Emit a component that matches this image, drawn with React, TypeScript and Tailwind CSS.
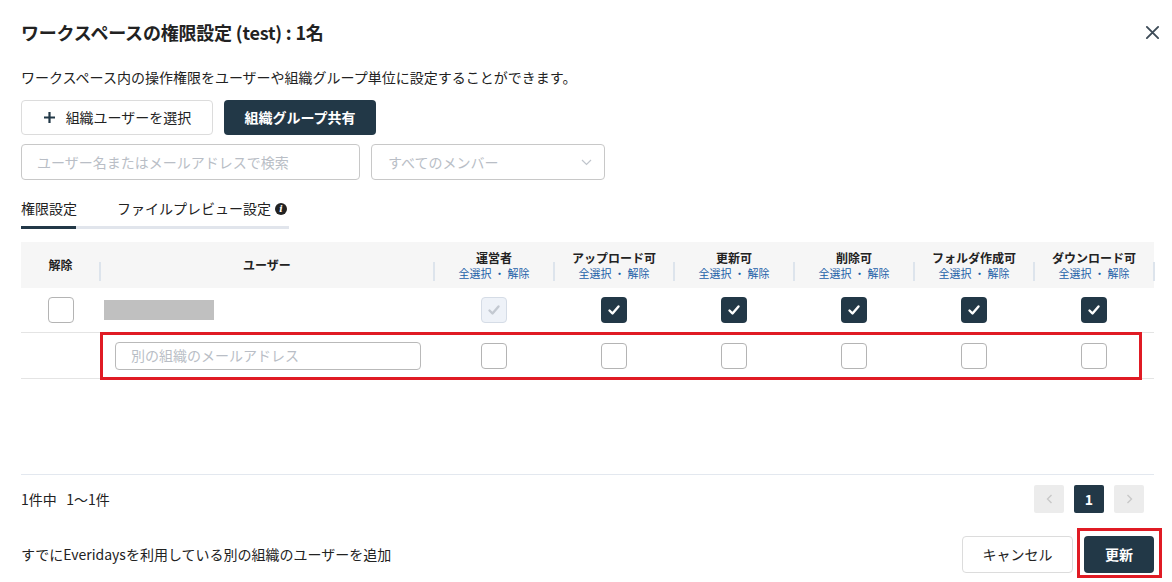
import React from 'react';

const cols = ['運営者', 'アップロード可', '更新可', '削除可', 'フォルダ作成可', 'ダウンロード可'];

const Check: React.FC<{ state: 'on' | 'off' | 'disabled' }> = ({ state }) => {
  if (state === 'on') {
    return (
      <div className="w-[26px] h-[26px] rounded-[4px] bg-[#223847] flex items-center justify-center">
        <svg width="14" height="14" viewBox="0 0 14 14" fill="none">
          <path d="M2.5 7.5l3 3 6-7" stroke="#fff" strokeWidth="2.4" strokeLinecap="round" strokeLinejoin="round" />
        </svg>
      </div>
    );
  }
  if (state === 'disabled') {
    return (
      <div className="w-[26px] h-[26px] rounded-[4px] bg-[#eef2f8] border border-[#d5dce6] flex items-center justify-center">
        <svg width="14" height="14" viewBox="0 0 14 14" fill="none">
          <path d="M2.5 7.5l3 3 6-7" stroke="#c3c9d1" strokeWidth="2.4" strokeLinecap="round" strokeLinejoin="round" />
        </svg>
      </div>
    );
  }
  return <div className="w-[26px] h-[26px] rounded-[4px] bg-white border border-[#b4b4b4]" />;
};

const App: React.FC = () => {
  return (
    <div className="w-[1172px] h-[582px] bg-white text-[#222] font-['Noto_Sans_CJK_JP','Noto_Sans',sans-serif] pl-[21px] pr-[18px] relative overflow-hidden">
      {/* title */}
      <div className="h-[64px] flex items-center justify-between">
        <h1 className="text-[18px] font-bold text-[#222] tracking-[-0.2px]">ワークスペースの権限設定 (test) : 1名</h1>
        <button type="button" className="mr-[-6px] text-[#3d4b57]">
          <svg width="15" height="15" viewBox="0 0 16 16" fill="none">
            <path d="M2 2l12 12M14 2L2 14" stroke="currentColor" strokeWidth="2" strokeLinecap="round" />
          </svg>
        </button>
      </div>

      <p className="mt-[3px] h-[20px] leading-[20px] text-[14px] text-[#222]">ワークスペース内の操作権限をユーザーや組織グループ単位に設定することができます。</p>

      {/* action buttons */}
      <div className="mt-[13px] flex gap-[11px]">
        <button type="button" className="w-[192px] h-[35px] rounded-[4px] border border-[#dcdcdc] bg-white flex items-center justify-center gap-[10px] text-[14px] text-[#222]">
          <svg width="13" height="13" viewBox="0 0 13 13" fill="none">
            <path d="M6.5 1v11M1 6.5h11" stroke="#223847" strokeWidth="2.2" />
          </svg>
          <span>組織ユーザーを選択</span>
        </button>
        <button type="button" className="w-[152px] h-[35px] rounded-[4px] bg-[#223847] text-white text-[14px] font-bold">組織グループ共有</button>
      </div>

      {/* search */}
      <div className="mt-[9px] flex gap-[11px]">
        <div className="w-[339px] h-[36px] rounded-[4px] border border-[#c8c8c8] flex items-center px-[15px] text-[14px] text-[#b9bec6]">ユーザー名またはメールアドレスで検索</div>
        <div className="w-[234px] h-[36px] rounded-[4px] border border-[#c8c8c8] flex items-center justify-between pl-[16px] pr-[12px] text-[14px] text-[#b9bec6]">
          <span>すべてのメンバー</span>
          <svg width="11" height="7" viewBox="0 0 11 7" fill="none">
            <path d="M1 1l4.5 4.5L10 1" stroke="#c0c5cc" strokeWidth="1.2" />
          </svg>
        </div>
      </div>

      {/* tabs */}
      <div className="mt-[18px] flex w-[268px] text-[14px]">
        <div className="w-[55px] pb-[7px] border-b-[3px] border-[#223847] text-[#222] whitespace-nowrap">権限設定</div>
        <div className="flex-1 pl-[41px] pb-[7px] border-b-[3px] border-[#e1e5ec] flex items-center gap-[4px] text-[#222]">
          <span className="whitespace-nowrap">ファイルプレビュー設定</span>
          <span className="w-[12px] h-[12px] rounded-full bg-[#222] text-white text-[9px] font-bold italic leading-[12px] text-center font-['DejaVu_Serif',serif]">i</span>
        </div>
      </div>

      {/* table */}
      <div className="mt-[13px] w-[1133px] relative">
        <div className="grid grid-cols-[79px_334px_repeat(6,120px)] h-[46px] bg-[#f6f6f6] text-[12px] font-bold text-[#222]">
          <div className="flex items-center justify-center relative">
            解除
            <span className="absolute right-[-1px] top-[20px] h-[19px] w-[2px] bg-[#dde4ec]" />
          </div>
          <div className="flex items-center justify-center relative">
            ユーザー
            <span className="absolute right-[-1px] top-[20px] h-[19px] w-[2px] bg-[#dde4ec]" />
          </div>
          {cols.map((c) => (
            <div key={c} className="flex flex-col items-center justify-center relative pt-[1px]">
              <span className="leading-[16px]">{c}</span>
              <span className="leading-[15px] text-[11px] font-normal text-[#1b5fa8]">全選択 ・ 解除</span>
              <span className="absolute right-[-1px] top-[20px] h-[19px] w-[2px] bg-[#dde4ec]" />
            </div>
          ))}
        </div>

        <div className="grid grid-cols-[79px_334px_repeat(6,120px)] h-[45px] border-b border-[#e4e4e4] items-center">
          <div className="flex justify-center"><Check state="off" /></div>
          <div className="pl-[4px]"><div className="w-[110px] h-[20px] bg-[#c0c0c0]" /></div>
          <div className="flex justify-center"><Check state="disabled" /></div>
          {cols.slice(1).map((c) => (
            <div key={c} className="flex justify-center"><Check state="on" /></div>
          ))}
        </div>

        <div className="grid grid-cols-[79px_334px_repeat(6,120px)] h-[46px] border-b border-[#e4e4e4] items-center">
          <div />
          <div className="pl-[15px]">
            <div className="w-[306px] h-[28px] rounded-[4px] border border-[#b9b9b9] flex items-center px-[15px] text-[14px] text-[#b9bec6]">別の組織のメールアドレス</div>
          </div>
          {cols.map((c) => (
            <div key={c} className="flex justify-center"><Check state="off" /></div>
          ))}
        </div>

        {/* red annotation */}
        <div className="absolute left-[79px] top-[90px] w-[1042px] h-[48px] border-[3px] border-[#e01b24] pointer-events-none" />
      </div>

      {/* footer */}
      <div className="mt-[95px] w-[1133px] border-t border-[#e3e8ef]">
        <div className="h-[48px] flex items-center justify-between pr-[10px]">
          <span className="text-[14px] text-[#222]">1件中&nbsp;&nbsp;&nbsp;1～1件</span>
          <div className="flex gap-[10px]">
            <div className="w-[30px] h-[28px] rounded-[2px] bg-[#ececec] flex items-center justify-center">
              <svg width="7" height="10" viewBox="0 0 7 10" fill="none"><path d="M5.5 1L1.5 5l4 4" stroke="#c8c8c8" strokeWidth="1.4" /></svg>
            </div>
            <div className="w-[30px] h-[28px] rounded-[2px] bg-[#223847] flex items-center justify-center text-white text-[14px] font-bold">1</div>
            <div className="w-[30px] h-[28px] rounded-[2px] bg-[#ececec] flex items-center justify-center">
              <svg width="7" height="10" viewBox="0 0 7 10" fill="none"><path d="M1.5 1l4 4-4 4" stroke="#c8c8c8" strokeWidth="1.4" /></svg>
            </div>
          </div>
        </div>
        <div className="mt-[13px] h-[37px] flex items-center justify-between">
          <span className="text-[14px] text-[#222]">すでにEveridaysを利用している別の組織のユーザーを追加</span>
          <div className="flex gap-[11px] relative">
            <button type="button" className="w-[111px] h-[37px] rounded-[4px] border border-[#dcdcdc] bg-white text-[14px] text-[#222]">キャンセル</button>
            <button type="button" className="w-[70px] h-[37px] rounded-[4px] bg-[#223847] text-white text-[14px] font-bold">更新</button>
            <div className="absolute right-[-8px] top-[-8px] w-[85px] h-[50px] border-[3px] border-[#e01b24] pointer-events-none" />
          </div>
        </div>
      </div>
    </div>
  );
};

export default App;
